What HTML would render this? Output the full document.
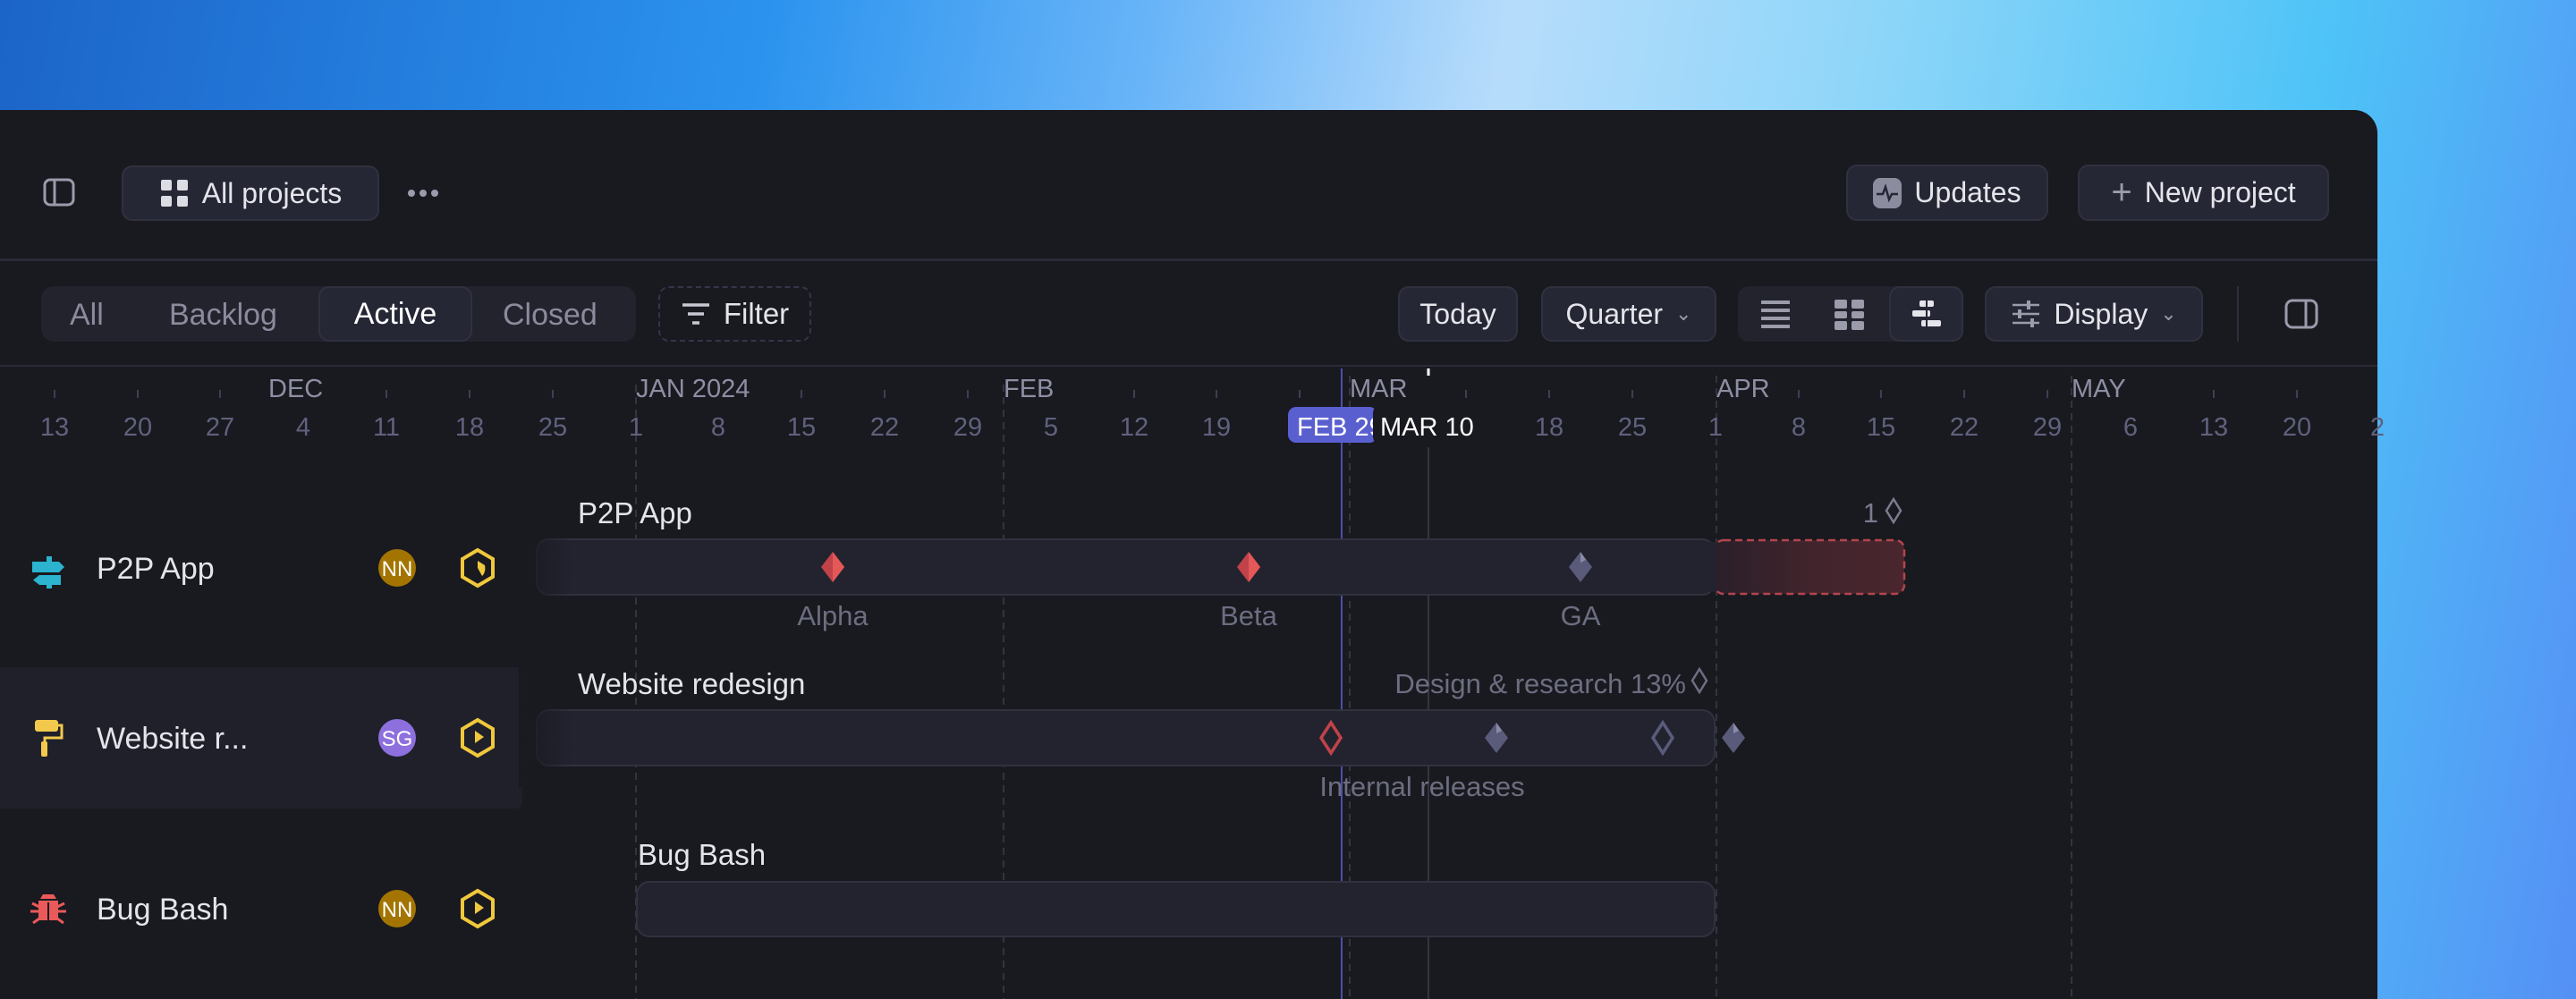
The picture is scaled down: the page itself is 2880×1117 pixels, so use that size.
<!DOCTYPE html>
<html style="overflow:hidden;width:2880px;height:1117px"><head><meta charset="utf-8"><style>
*{box-sizing:border-box;margin:0;padding:0}
body{width:2880px;height:1117px;overflow:hidden;position:relative;font-family:"Liberation Sans",sans-serif;
background:linear-gradient(100deg,#1c64c8 0%,#2b93ee 28%,#68b4f8 42%,#b7dcfb 55%,#8fd6f9 68%,#4ec3f7 85%,#5590f5 100%);}
.panel{position:absolute;left:0;top:123px;width:2658px;height:994px;background:#191920;border-top-right-radius:26px;overflow:hidden}
.btn{position:absolute;background:#262735;border:2px solid #30313f;border-radius:12px;color:#e4e4ea;font-size:32px;display:flex;align-items:center;justify-content:center;gap:14px}
.hr{position:absolute;left:0;width:2658px;height:3px;background:#2a2b36}
.t{position:absolute;color:#e4e4ea;font-size:33px;white-space:nowrap}
svg{position:absolute;left:0;top:0}
</style></head><body>
<div class="panel">
  <svg width="40" height="40" style="left:46px;top:72px" viewBox="0 0 40 40"><rect x="4" y="6" width="32" height="28" rx="6" fill="none" stroke="#9a9bab" stroke-width="3"/><line x1="15" y1="7" x2="15" y2="33" stroke="#9a9bab" stroke-width="3"/></svg>
  <div class="btn" style="left:136px;top:62px;width:288px;height:62px"><svg width="34" height="34" viewBox="0 0 34 34" style="position:static"><rect x="2" y="2" width="12" height="12" rx="2" fill="#dcdce4"/><rect x="20" y="2" width="12" height="12" rx="2" fill="#dcdce4"/><rect x="2" y="20" width="12" height="12" rx="2" fill="#dcdce4"/><rect x="20" y="20" width="12" height="12" rx="2" fill="#dcdce4"/></svg>All projects</div>
  <svg width="40" height="10" style="left:454px;top:88px" viewBox="0 0 40 10"><circle cx="6" cy="5" r="4" fill="#9a9bab"/><circle cx="19" cy="5" r="4" fill="#9a9bab"/><circle cx="32" cy="5" r="4" fill="#9a9bab"/></svg>
  <div class="btn" style="left:2064px;top:61px;width:226px;height:63px"><svg width="32" height="34" viewBox="0 0 32 34" style="position:static"><rect x="0" y="0" width="32" height="34" rx="8" fill="#8b8c9e"/><path d="M4 18h7l3-8 4 14 3-6h7" fill="none" stroke="#262735" stroke-width="2.5"/></svg>Updates</div>
  <div class="btn" style="left:2323px;top:61px;width:281px;height:63px"><span style="font-size:40px;color:#9a9bab;font-weight:300">+</span>New project</div>
  <div class="hr" style="top:166px"></div>
  <div style="position:absolute;left:46px;top:197px;width:665px;height:62px;background:#22232d;border-radius:14px"></div>
  <div class="t" style="left:78px;top:210px;color:#8a8b9c;font-size:34px">All</div>
  <div class="t" style="left:189px;top:210px;color:#8a8b9c;font-size:34px">Backlog</div>
  <div class="btn" style="left:356px;top:197px;width:172px;height:62px;font-size:34px;color:#fff">Active</div>
  <div class="t" style="left:562px;top:210px;color:#8a8b9c;font-size:34px">Closed</div>
  <div class="btn" style="left:736px;top:197px;width:171px;height:62px;background:transparent;border:2px dashed #34354a;font-size:33px"><svg width="34" height="30" viewBox="0 0 34 30" style="position:static"><path d="M2 5h30M8 15h18M13 25h8" stroke="#c8c8d2" stroke-width="3.5"/></svg>Filter</div>
  <div class="btn" style="left:1563px;top:197px;width:134px;height:62px">Today</div>
  <div class="btn" style="left:1723px;top:197px;width:196px;height:62px">Quarter <span style="font-size:22px;color:#9a9bab">&#8964;</span></div>
  <div style="position:absolute;left:1943px;top:197px;width:252px;height:62px;background:#22232d;border-radius:12px"></div>
  <svg width="36" height="34" style="left:1967px;top:212px" viewBox="0 0 36 34"><path d="M2 3h32M2 12h32M2 21h32M2 30h32" stroke="#9a9bab" stroke-width="4"/></svg>
  <svg width="36" height="36" style="left:2050px;top:211px" viewBox="0 0 36 36"><rect x="1" y="1" width="14" height="10" rx="2" fill="#9a9bab"/><rect x="20" y="1" width="14" height="10" rx="2" fill="#9a9bab"/><rect x="1" y="14" width="14" height="8" rx="2" fill="#9a9bab"/><rect x="20" y="14" width="14" height="8" rx="2" fill="#9a9bab"/><rect x="1" y="25" width="14" height="10" rx="2" fill="#9a9bab"/><rect x="20" y="25" width="14" height="10" rx="2" fill="#9a9bab"/></svg>
  <div class="btn" style="left:2112px;top:197px;width:83px;height:62px"><svg width="36" height="36" viewBox="0 0 36 36" style="position:static"><rect x="10" y="3" width="16" height="7" rx="2" fill="#e4e4ea"/><rect x="2" y="14" width="20" height="7" rx="2" fill="#e4e4ea"/><rect x="12" y="25" width="22" height="7" rx="2" fill="#e4e4ea"/><line x1="18" y1="0" x2="18" y2="36" stroke="#262735" stroke-width="2"/></svg></div>
  <div class="btn" style="left:2219px;top:197px;width:244px;height:62px"><svg width="34" height="32" viewBox="0 0 34 32" style="position:static"><path d="M2 6h30M2 16h30M2 26h30" stroke="#9a9bab" stroke-width="2.5"/><path d="M20 1v10M10 11v10M24 21v10" stroke="#9a9bab" stroke-width="4"/></svg>Display <span style="font-size:22px;color:#9a9bab">&#8964;</span></div>
  <div style="position:absolute;left:2501px;top:197px;width:2px;height:62px;background:#2e2f3a"></div>
  <svg width="40" height="40" style="left:2553px;top:208px" viewBox="0 0 40 40"><rect x="3" y="5" width="34" height="30" rx="7" fill="none" stroke="#9a9bab" stroke-width="3"/><line x1="25" y1="6" x2="25" y2="34" stroke="#9a9bab" stroke-width="3"/></svg>
  <div class="hr" style="top:285px;height:2px"></div>
  <div style="position:absolute;left:0;top:623px;width:584px;height:158px;background:#1f202a;border-radius:0 8px 8px 0"></div>
</div>

<svg width="2880" height="1117" viewBox="0 0 2880 1117" font-family="Liberation Sans, sans-serif">
  <defs>
    <linearGradient id="fadeL" x1="0" x2="1"><stop offset="0" stop-color="#191920"/><stop offset="1" stop-color="#191920" stop-opacity="0"/></linearGradient>
    <linearGradient id="red" x1="0" x2="1"><stop offset="0" stop-color="#2a1f2a"/><stop offset="0.5" stop-color="#41242c"/><stop offset="1" stop-color="#4a262e"/></linearGradient>
  </defs>
  <g stroke="#33343f" stroke-width="2" stroke-dasharray="8 6">
    <line x1="711" y1="430" x2="711" y2="1117"/>
    <line x1="1122" y1="430" x2="1122" y2="1117"/>
    <line x1="1509" y1="420" x2="1509" y2="1117"/>
    <line x1="1919" y1="420" x2="1919" y2="1117"/>
    <line x1="2316" y1="420" x2="2316" y2="1117"/>
  </g>
  <line x1="1597" y1="500" x2="1597" y2="1117" stroke="#34353f" stroke-width="2"/>
  <line x1="1597" y1="412" x2="1597" y2="420" stroke="#fff" stroke-width="3"/>
  <line x1="1500" y1="412" x2="1500" y2="1117" stroke="#4b4fa8" stroke-width="2"/>
  <g fill="#8d8fa3" font-size="29">
    <text x="300" y="444">DEC</text><text x="711" y="444">JAN 2024</text><text x="1122" y="444">FEB</text><text x="1509" y="444">MAR</text><text x="1919" y="444">APR</text><text x="2316" y="444">MAY</text>
  </g>
  <g stroke="#3d3f52" stroke-width="2">
    <line x1="61" y1="436" x2="61" y2="445"/><line x1="154" y1="436" x2="154" y2="445"/><line x1="246" y1="436" x2="246" y2="445"/><line x1="432" y1="436" x2="432" y2="445"/><line x1="525" y1="436" x2="525" y2="445"/><line x1="618" y1="436" x2="618" y2="445"/><line x1="896" y1="436" x2="896" y2="445"/><line x1="989" y1="436" x2="989" y2="445"/><line x1="1082" y1="436" x2="1082" y2="445"/><line x1="1268" y1="436" x2="1268" y2="445"/><line x1="1360" y1="436" x2="1360" y2="445"/><line x1="1453" y1="436" x2="1453" y2="445"/><line x1="1639" y1="436" x2="1639" y2="445"/><line x1="1732" y1="436" x2="1732" y2="445"/><line x1="1825" y1="436" x2="1825" y2="445"/><line x1="2011" y1="436" x2="2011" y2="445"/><line x1="2103" y1="436" x2="2103" y2="445"/><line x1="2196" y1="436" x2="2196" y2="445"/><line x1="2289" y1="436" x2="2289" y2="445"/><line x1="2475" y1="436" x2="2475" y2="445"/><line x1="2568" y1="436" x2="2568" y2="445"/>
  </g>
  <g fill="#5f627c" font-size="29" text-anchor="middle">
    <text x="61" y="487">13</text><text x="154" y="487">20</text><text x="246" y="487">27</text><text x="339" y="487">4</text><text x="432" y="487">11</text><text x="525" y="487">18</text><text x="618" y="487">25</text><text x="711" y="487">1</text><text x="803" y="487">8</text><text x="896" y="487">15</text><text x="989" y="487">22</text><text x="1082" y="487">29</text><text x="1175" y="487">5</text><text x="1268" y="487">12</text><text x="1360" y="487">19</text><text x="1732" y="487">18</text><text x="1825" y="487">25</text><text x="1918" y="487">1</text><text x="2011" y="487">8</text><text x="2103" y="487">15</text><text x="2196" y="487">22</text><text x="2289" y="487">29</text><text x="2382" y="487">6</text><text x="2475" y="487">13</text><text x="2568" y="487">20</text><text x="2658" y="487">2</text>
  </g>
  <rect x="1440" y="455" width="100" height="40" rx="9" fill="#5a5fd0"/>
  <text x="1450" y="487" fill="#fff" font-size="29">FEB 29</text>
  <rect x="1535" y="452" width="120" height="46" rx="10" fill="#191920"/>
  <text x="1543" y="487" fill="#fff" font-size="29">MAR 10</text>

  <g>
    <rect x="52" y="622" width="6" height="8" fill="#2bb3cf"/><rect x="52" y="650" width="6" height="8" fill="#2bb3cf"/>
    <path d="M36 628h30l6 6-6 6H36z" fill="#2bb3cf"/><path d="M44 643h24v11H44l-7-5.5z" fill="#2bb3cf"/>
    <text x="108" y="647" fill="#e4e4ea" font-size="34">P2P App</text>
    <circle cx="444" cy="635" r="21" fill="#a37500"/><text x="444" y="644" fill="#fff" font-size="24" text-anchor="middle">NN</text>
    <path d="M534 615l17 10v20l-17 10-17-10v-20z" fill="none" stroke="#f0c83c" stroke-width="4"/><path d="M534 627v8l5 9c3-3 4-7 3-12z" fill="#f0c83c"/>

    <rect x="39" y="805" width="26" height="13" rx="3" fill="#f2c94c"/><path d="M65 811h4v14H50v6" fill="none" stroke="#f2c94c" stroke-width="3"/><rect x="46" y="829" width="7" height="17" rx="2" fill="#f2c94c"/>
    <text x="108" y="837" fill="#e4e4ea" font-size="34">Website r...</text>
    <circle cx="444" cy="825" r="21" fill="#8d6fde"/><text x="444" y="834" fill="#fff" font-size="24" text-anchor="middle">SG</text>
    <path d="M534 805l17 10v20l-17 10-17-10v-20z" fill="none" stroke="#f0c83c" stroke-width="4"/><path d="M531 817l10 7-10 7z" fill="#f0c83c"/>

    <path d="M48 1000h12l3 5H45z M43 1007h22v22H43z" fill="#ea5a5a"/><path d="M36 1010l8 4M72 1010l-8 4M34 1019h9M74 1019h-9M37 1032l7-5M71 1032l-7-5" stroke="#ea5a5a" stroke-width="3"/><line x1="54" y1="1009" x2="54" y2="1029" stroke="#191920" stroke-width="2"/>
    <text x="108" y="1028" fill="#e4e4ea" font-size="34">Bug Bash</text>
    <circle cx="444" cy="1016" r="21" fill="#a37500"/><text x="444" y="1025" fill="#fff" font-size="24" text-anchor="middle">NN</text>
    <path d="M534 996l17 10v20l-17 10-17-10v-20z" fill="none" stroke="#f0c83c" stroke-width="4"/><path d="M531 1008l10 7-10 7z" fill="#f0c83c"/>
  </g>

  <rect x="600" y="603" width="1317" height="62" rx="14" fill="#22232f" stroke="#30323f" stroke-width="2"/>
  <rect x="1917" y="604" width="212" height="60" rx="10" fill="url(#red)" stroke="#b3454d" stroke-width="2.5" stroke-dasharray="8 5"/>
  <rect x="1905" y="606" width="14" height="56" fill="#22232f"/>
  <rect x="600" y="794" width="1317" height="62" rx="14" fill="#22232f" stroke="#30323f" stroke-width="2"/>
  <rect x="580" y="590" width="60" height="290" fill="url(#fadeL)"/>
  <rect x="712" y="986" width="1205" height="61" rx="14" fill="#22232f" stroke="#30323f" stroke-width="2"/>

  <g fill="#e4e4ea" font-size="33">
    <text x="646" y="585">P2P App</text>
    <text x="646" y="776">Website redesign</text>
    <text x="713" y="967">Bug Bash</text>
  </g>
  <text x="2100" y="584" fill="#7a7c8e" font-size="31" text-anchor="end">1</text>
  <path d="M2117 558l8 13-8 13-8-13z" fill="none" stroke="#7a7c8e" stroke-width="2.5"/>
  <text x="1885" y="775" fill="#6c6e80" font-size="31" text-anchor="end">Design &amp; research 13%</text>
  <path d="M1900 748l8 13-8 13-8-13z" fill="none" stroke="#6c6e80" stroke-width="2.5"/>

  <g>
    <path d="M931 617l13 17-13 17-13-17z" fill="#c2424a"/><path d="M931 617l13 17-13 17z" fill="#e45858"/>
    <path d="M1396 617l13 17-13 17-13-17z" fill="#c2424a"/><path d="M1396 617l13 17-13 17z" fill="#e45858"/>
    <path d="M1767 617l13 17-13 17-13-17z" fill="#5a5b7a"/><path d="M1767 617l6 9-6 3z" fill="#8a8ba8"/>
    <path d="M1488 808l11 17-11 17-11-17z" fill="none" stroke="#c2424a" stroke-width="3.5"/>
    <path d="M1673 808l13 17-13 17-13-17z" fill="#5a5b7a"/><path d="M1673 808l6 9-6 3z" fill="#8a8ba8"/>
    <path d="M1859 808l11 17-11 17-11-17z" fill="none" stroke="#5a5b7a" stroke-width="3.5"/>
    <path d="M1938 808l13 17-13 17-13-17z" fill="#5a5b7a"/><path d="M1938 808l6 9-6 3z" fill="#8a8ba8"/>
  </g>
  <g fill="#6c6e80" font-size="31" text-anchor="middle">
    <text x="931" y="699">Alpha</text><text x="1396" y="699">Beta</text><text x="1767" y="699">GA</text>
    <text x="1590" y="890">Internal releases</text>
  </g>
</svg>
</body></html>
